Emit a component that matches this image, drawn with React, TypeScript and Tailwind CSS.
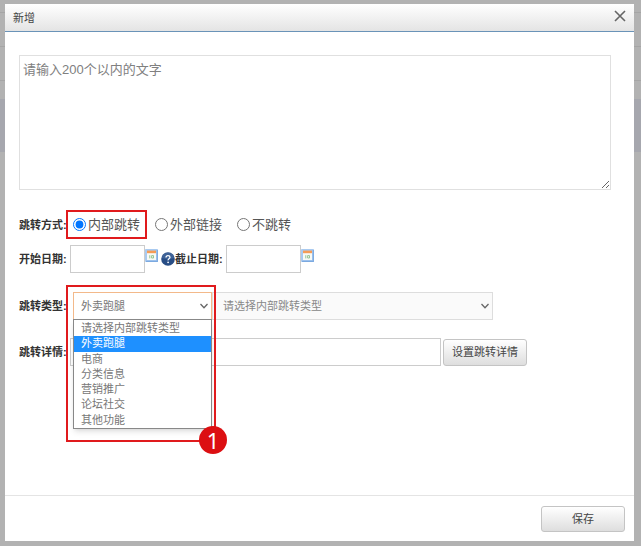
import { useState, type ReactNode } from 'react';

const jumpModes = ['内部跳转', '外部链接', '不跳转'];

const jumpTypes = ['请选择内部跳转类型', '外卖跑腿', '电商', '分类信息', '营销推广', '论坛社交', '其他功能'];

function Chevron() {
    return (
        <svg className="pointer-events-none absolute right-1 top-1/2 h-2 w-2 -translate-y-1/2" viewBox="0 0 8 8" fill="none">
            <path d="M0.5 2 L4 5.7 L7.5 2" stroke="#666" strokeWidth="1.3" />
        </svg>
    );
}

function CalendarIcon() {
    return (
        <svg className="h-[13px] w-[13px]" viewBox="0 0 13 13">
            <rect width="13" height="13" rx="0.8" fill="#a9caf0" />
            <path d="M12.3 1v11.3H1" stroke="#7ba9e0" strokeWidth="1.2" fill="none" />
            <rect x="2" y="2" width="9" height="9" fill="#f8faf5" />
            <rect x="2" y="1.6" width="9" height="2.6" fill="#f59c55" />
            <path d="M4.8 6.2v3.2M6.6 6.6h1.9v2.4H6.6z" stroke="#8cbf8a" strokeWidth="0.9" fill="none" />
        </svg>
    );
}

function HelpIcon() {
    return (
        <svg className="h-[14px] w-[14px] shrink-0" viewBox="0 0 14 14">
            <circle cx="7" cy="7" r="6.8" fill="#284d85" />
            <path d="M1 6a6 5.5 0 0 1 12 0Q7 8 1 6z" fill="#5579ab" opacity="0.5" />
            <path d="M5 5.4Q5 3.7 7 3.7T9 5.2Q9 6 8 6.7T7.1 8.4" stroke="#fff" strokeWidth="1.3" fill="none" />
            <circle cx="7.1" cy="10.3" r="0.9" fill="#fff" />
        </svg>
    );
}

function FieldLabel({ htmlFor, children }: { htmlFor: string; children: ReactNode }) {
    return (
        <label htmlFor={htmlFor} className="w-[49px] shrink-0 whitespace-nowrap font-bold text-[#333]">
            {children}
        </label>
    );
}

function DateField({ id }: { id: string }) {
    return (
        <>
            <input id={id} type="text" className="ml-[2px] h-7 w-[75px] border border-[#ccc] bg-white px-1" />
            <button type="button" aria-label="选择日期" className="mb-2 shrink-0">
                <CalendarIcon />
            </button>
        </>
    );
}

export default function App() {
    const [mode, setMode] = useState('内部跳转');
    const [type, setType] = useState('外卖跑腿');

    return (
        <div className="relative isolate flex min-h-screen flex-col bg-[#b2b2b2] pb-[5px] pl-[5px] pr-[7px] pt-1 font-['Liberation_Sans','Noto_Sans_CJK_SC',sans-serif] text-[11px] leading-4 text-[#777]">
            {/* Dimmed page rows behind the dialog */}
            <div aria-hidden="true" className="absolute inset-x-0 top-0 -z-10">
                <div className="h-[13px] border-b border-[#a5a5a5]" />
                <div className="h-[34px] border-b border-[#a5a5a5]" />
                <div className="h-[34px] border-b border-[#a5a5a5]" />
                <div className="mt-[18px] h-[53px] bg-[#a6a7ae]" />
            </div>

            <div role="dialog" aria-labelledby="dialog-title" className="flex grow flex-col bg-white">
                {/* Title bar */}
                <div className="flex h-7 items-center justify-between border-b border-[#6a93b8] bg-linear-to-b from-white to-[#e4e4e4] px-2">
                    <h2 id="dialog-title" className="text-[#444]">新增</h2>
                    <button type="button" aria-label="关闭" className="mb-1">
                        <svg className="h-3 w-3" viewBox="0 0 12 12">
                            <path d="M1 1L11 11M11 1L1 11" stroke="#666" strokeWidth="1.6" />
                        </svg>
                    </button>
                </div>

                {/* Form */}
                <form className="grow pl-[14px] pr-[23px] pt-[23px]">
                    <textarea
                        aria-label="文字"
                        placeholder="请输入200个以内的文字"
                        className="block h-[135px] w-full resize border border-[#e0e0e0] px-[3px] py-1 text-[13px] leading-5 placeholder:text-[#808080]"
                    />

                    <div className="mt-5 flex h-[29px] items-center">
                        <FieldLabel htmlFor="mode-0">跳转方式:</FieldLabel>
                        <div className="-ml-[2px] flex h-full items-center gap-[15px] text-[13px] text-[#555]">
                            {jumpModes.map((m, i) => (
                                <span key={m} className={i === 0 ? '-mr-[7px] flex h-full items-center border-2 border-[#e01a1d] px-[5px]' : 'flex items-center'}>
                                    <input
                                        id={`mode-${i}`}
                                        type="radio"
                                        name="mode"
                                        checked={mode === m}
                                        onChange={() => setMode(m)}
                                        className="mr-[2px] h-[13px] w-[13px]"
                                    />
                                    <label htmlFor={`mode-${i}`}>{m}</label>
                                </span>
                            ))}
                        </div>
                    </div>

                    <div className="mt-[6px] flex h-7 items-center">
                        <FieldLabel htmlFor="start">开始日期:</FieldLabel>
                        <DateField id="start" />
                        <span className="ml-[3px]"><HelpIcon /></span>
                        <FieldLabel htmlFor="end">截止日期:</FieldLabel>
                        <DateField id="end" />
                    </div>

                    <div className="mt-[19px] flex h-7 items-center">
                        <FieldLabel htmlFor="type">跳转类型:</FieldLabel>
                        <div className="relative ml-[5px] w-[139px] shrink-0">
                            <select
                                id="type"
                                value={type}
                                onChange={(e) => setType(e.target.value)}
                                className="block h-7 w-full appearance-none border border-[#f3b98a] bg-white px-[7px]"
                            >
                                {jumpTypes.map((t) => (
                                    <option key={t}>{t}</option>
                                ))}
                            </select>
                            <Chevron />

                            {/* Open list */}
                            <ul className="absolute left-0 top-[27px] z-10 flex h-[110px] w-full flex-col border border-[#888] bg-white pt-px leading-[15px] shadow-md">
                                {jumpTypes.map((t) => (
                                    <li key={t} className={t === type ? 'flex-1 bg-[#1e90ff] px-[7px] text-white' : 'flex-1 px-[7px]'}>
                                        {t}
                                    </li>
                                ))}
                            </ul>

                            {/* Step marker */}
                            <div className="pointer-events-none absolute -left-[7px] -top-[7px] z-20 h-[157px] w-[150px] border-2 border-[#e01a1d]">
                                <span className="absolute -bottom-[14px] -right-[13px] flex h-7 w-7 items-center justify-center rounded-full bg-[#dc0f12] font-['Noto_Sans',sans-serif] text-[22px] leading-7 text-white">
                                    1
                                </span>
                            </div>
                        </div>
                        <div className="relative w-[281px]">
                            <select
                                aria-label="内部跳转类型"
                                className="block h-7 w-full appearance-none border border-[#ddd] bg-[#fafafa] px-[10px] text-[#888]"
                            >
                                <option>请选择内部跳转类型</option>
                            </select>
                            <Chevron />
                        </div>
                    </div>

                    <div className="mt-[18px] flex h-7 items-center">
                        <FieldLabel htmlFor="detail">跳转详情:</FieldLabel>
                        <input id="detail" type="text" className="ml-[2px] h-7 w-[371px] border border-[#ccc] px-2" />
                        <button
                            type="button"
                            className="ml-[2px] h-[27px] w-[84px] shrink-0 rounded-[3px] border border-[#c4c4c4] bg-linear-to-b from-white to-[#dedede] text-[#444]"
                        >
                            设置跳转详情
                        </button>
                    </div>
                </form>

                {/* Footer */}
                <div className="flex h-[46px] items-center justify-end border-t border-[#e4e4e4] pr-[9px]">
                    <button
                        type="button"
                        className="h-[26px] w-[84px] rounded-[3px] border border-[#c4c4c4] bg-linear-to-b from-white to-[#dedede] text-[#444]"
                    >
                        保存
                    </button>
                </div>
            </div>
        </div>
    );
}
